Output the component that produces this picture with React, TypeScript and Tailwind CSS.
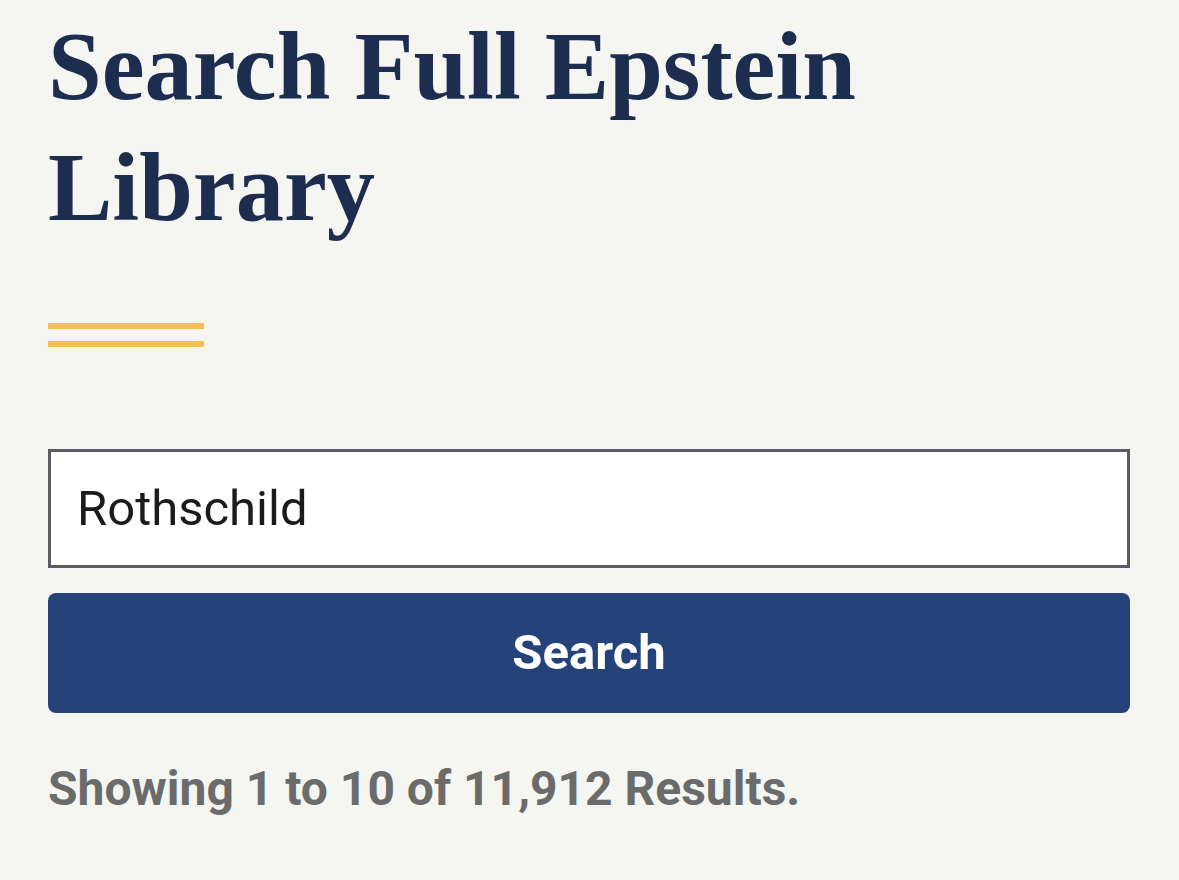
import React, { useState } from 'react'

const App: React.FC = () => {
    const [query, setQuery] = useState('Rothschild')

    return (
        <div className="min-h-screen bg-[#f5f5f1] pl-[48px] pr-[49px] pt-[6px]">
            <h1 className="font-['Liberation_Serif',serif] text-[96.5px] leading-[121px] font-bold text-[#1c2d50]">
                Search Full Epstein
                <br />
                Library
            </h1>

            <div className="mt-[75px] flex flex-col gap-[12px]">
                <div className="h-[6px] w-[156px] bg-[#f6bf4f]"></div>
                <div className="h-[6px] w-[156px] bg-[#f6bf4f]"></div>
            </div>

            <form className="mt-[102px]" onSubmit={(e) => e.preventDefault()}>
                <input
                    type="text"
                    value={query}
                    onChange={(e) => setQuery(e.target.value)}
                    className="block h-[119px] w-full border-[3px] border-[#5a5b64] bg-white pl-[26px] font-['Roboto',sans-serif] text-[49px] text-[#1b1b1b] outline-none"
                />
                <button
                    type="submit"
                    className="mt-[25px] flex h-[120px] w-full items-center justify-center rounded-[8px] bg-[#25437a] font-['Roboto',sans-serif] text-[49px] font-bold text-white"
                >
                    Search
                </button>
            </form>

            <p className="mt-[48px] font-['Roboto',sans-serif] text-[48px] font-bold leading-[56px] text-[#6b6b6b]">
                Showing 1 to 10 of 11,912 Results.
            </p>
        </div>
    )
}

export default App
